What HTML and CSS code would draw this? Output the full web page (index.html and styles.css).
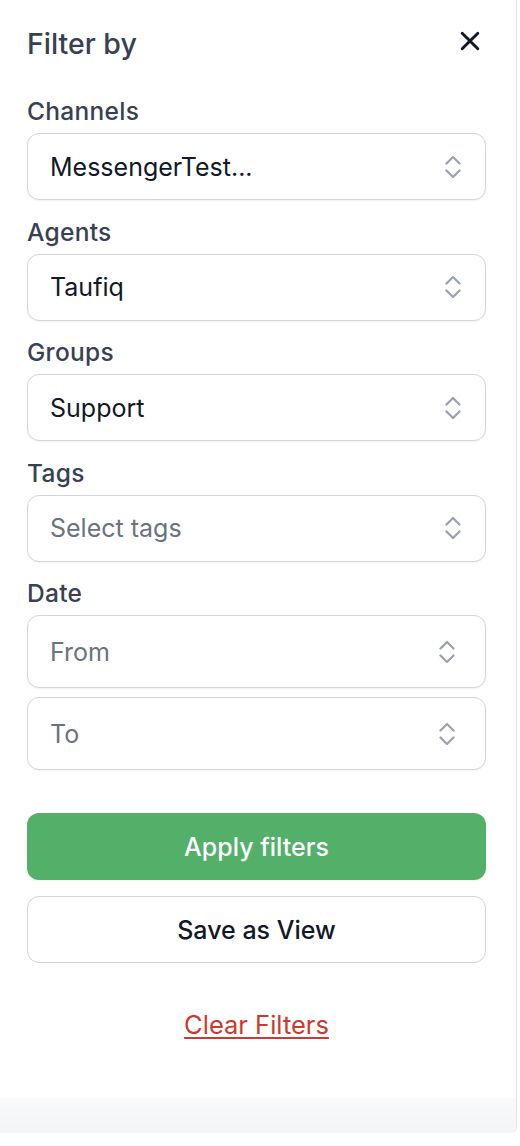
FILE: index.html
```html
<!DOCTYPE html>
<html lang="en">
<head>
<meta charset="utf-8">
<title>Filter by</title>
<link rel="stylesheet" href="styles.css">
</head>
<body>
<aside class="panel">
  <div class="content">
    <header class="head">
      <h2 class="title">Filter by</h2>
      <button class="close" aria-label="Close">
        <svg viewBox="0 0 20 20" width="20" height="20"><path d="M2.2 2.2L17.8 17.8M17.8 2.2L2.2 17.8" stroke="#111827" stroke-width="2.9" stroke-linecap="round" fill="none"/></svg>
      </button>
    </header>

    <div class="field">
      <label class="label">Channels</label>
      <div class="select"><span class="value">MessengerTest...</span><svg class="chev" viewBox="0 0 16 24" width="16" height="24"><polyline points="1.5,8.5 8,2 14.5,8.5"/><polyline points="1.5,15.5 8,22 14.5,15.5"/></svg></div>
    </div>

    <div class="field">
      <label class="label">Agents</label>
      <div class="select"><span class="value">Taufiq</span><svg class="chev" viewBox="0 0 16 24" width="16" height="24"><polyline points="1.5,8.5 8,2 14.5,8.5"/><polyline points="1.5,15.5 8,22 14.5,15.5"/></svg></div>
    </div>

    <div class="field">
      <label class="label">Groups</label>
      <div class="select"><span class="value">Support</span><svg class="chev" viewBox="0 0 16 24" width="16" height="24"><polyline points="1.5,8.5 8,2 14.5,8.5"/><polyline points="1.5,15.5 8,22 14.5,15.5"/></svg></div>
    </div>

    <div class="field">
      <label class="label">Tags</label>
      <div class="select"><span class="value placeholder">Select tags</span><svg class="chev" viewBox="0 0 16 24" width="16" height="24"><polyline points="1.5,8.5 8,2 14.5,8.5"/><polyline points="1.5,15.5 8,22 14.5,15.5"/></svg></div>
    </div>

    <div class="field">
      <label class="label">Date</label>
      <div class="dates">
        <div class="select date"><span class="value placeholder">From</span><svg class="chev" viewBox="0 0 16 24" width="16" height="24"><polyline points="1.5,8.5 8,2 14.5,8.5"/><polyline points="1.5,15.5 8,22 14.5,15.5"/></svg></div>
        <div class="select date"><span class="value placeholder">To</span><svg class="chev" viewBox="0 0 16 24" width="16" height="24"><polyline points="1.5,8.5 8,2 14.5,8.5"/><polyline points="1.5,15.5 8,22 14.5,15.5"/></svg></div>
      </div>
    </div>

    <div class="actions">
      <button class="btn primary">Apply filters</button>
      <button class="btn secondary">Save as View</button>
    </div>

    <a class="clear" href="#">Clear Filters</a>
  </div>
  <div class="footer"></div>
</aside>
</body>
</html>
```
FILE: styles.css
```css
* { box-sizing: border-box; }
html, body { margin: 0; padding: 0; background: #ffffff; }
body { font-family: Inter, "Noto Sans", Roboto, sans-serif; }

.panel {
  width: 517px;
  height: 1133px;
  border-right: 1px solid #e2e4e8;
  border-bottom-right-radius: 6px;
  display: flex;
  flex-direction: column;
  background: #fff;
  overflow: hidden;
}

.content {
  padding: 24px 30px 0 27px;
  display: flex;
  flex-direction: column;
}

.head {
  display: flex;
  align-items: flex-start;
  justify-content: space-between;
  height: 40px;
  margin-bottom: 31px;
}
.title {
  margin: 0;
  font-size: 28.5px;
  line-height: 40px;
  font-weight: 500;
  color: #374151;
}
.close {
  border: 0;
  background: none;
  padding: 0;
  width: 20px;
  height: 20px;
  margin-top: 7px;
  margin-right: 6px;
  display: flex;
}

.field {
  display: flex;
  flex-direction: column;
  gap: 6px;
  margin-bottom: 15.5px;
}
.label {
  font-size: 24.5px;
  line-height: 32px;
  font-weight: 500;
  letter-spacing: 0.3px;
  color: #374151;
}

.select {
  height: 67px;
  border: 1px solid #d3d5da;
  border-radius: 12px;
  box-shadow: 0 1px 2px rgba(0,0,0,0.05);
  display: flex;
  align-items: center;
  justify-content: space-between;
  padding: 0 24px 0 22px;
  background: #fff;
}
.value {
  font-size: 25px;
  color: #111827;
}
.value.placeholder { color: #6b7280; }

.chev { fill: none; stroke: #9ca3af; stroke-width: 2.3; stroke-linecap: round; stroke-linejoin: round; }

.dates { display: flex; flex-direction: column; gap: 9px; }
.select.date { height: 73px; padding-right: 30px; }

.actions {
  display: flex;
  flex-direction: column;
  gap: 16px;
  margin-top: 27.5px;
}
.btn {
  height: 67px;
  border-radius: 12px;
  font-family: inherit;
  font-size: 25px;
  font-weight: 500;
  cursor: pointer;
}
.btn.primary {
  background: #52b069;
  color: #fff;
  border: 0;
  box-shadow: 0 1px 2px rgba(0,0,0,0.06);
}
.btn.secondary {
  background: #fff;
  color: #111827;
  border: 1px solid #d3d5da;
}

.clear {
  align-self: center;
  margin-top: 46px;
  font-size: 25.5px;
  line-height: 32px;
  color: #cc3a2e;
  text-decoration: underline;
  text-underline-offset: 3px;
}

.footer {
  margin-top: auto;
  height: 35px;
  background: linear-gradient(#f9fafb, #f3f4f5);
}
```
